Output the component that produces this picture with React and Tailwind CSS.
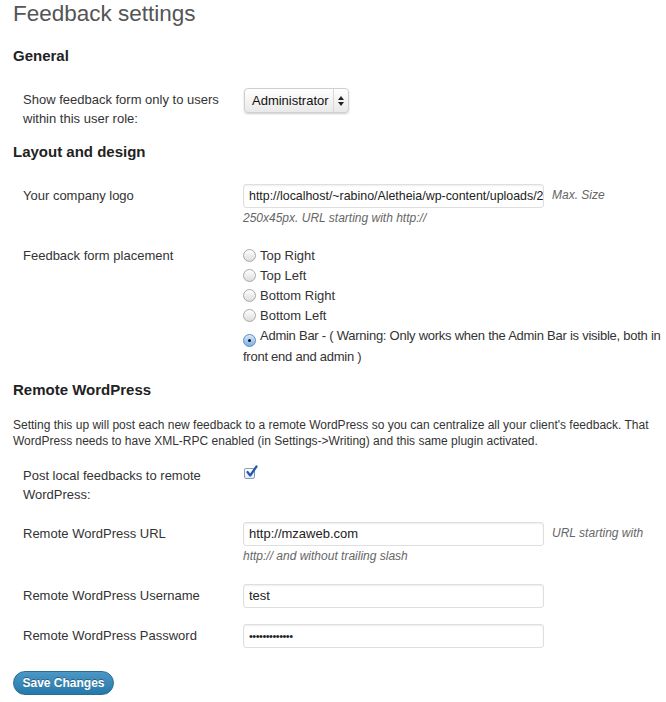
import React from 'react';

const font = { fontFamily: '"Liberation Sans", Arial, sans-serif' };

const Row = ({ label, children, tdClass = 'pt-[8px] pb-[8px] px-[10px]' }) => (
    <div className="flex">
        <div className="w-[220px] shrink-0 p-[10px] text-[13px] leading-[19px] text-[#333]">{label}</div>
        <div className={`flex-1 text-[13px] leading-[20px] text-[#333] ${tdClass}`}>{children}</div>
    </div>
);

const TextInput = ({ value, className = 'text-[13px]' }) => (
    <span className={`inline-flex h-[24px] w-[301px] items-center overflow-hidden whitespace-nowrap rounded-[3px] border border-[#dfdfdf] bg-white px-[5px] align-middle text-[#222] shadow-[inset_0_1px_2px_rgba(0,0,0,0.07)] ${className}`}>
        {value}
    </span>
);

const Radio = ({ checked }) => (
    <span
        className={`mr-[4px] inline-flex h-[13px] w-[13px] items-center justify-center rounded-full border align-[-2px] ${
            checked
                ? 'border-[#5b8bc4] bg-gradient-to-b from-[#d6e8fb] to-[#7eb1e6]'
                : 'border-[#a9a9a9] bg-gradient-to-b from-[#ffffff] to-[#dcdcdc]'
        }`}
    >
        {checked && <span className="h-[3px] w-[3px] rounded-full bg-[#111]" />}
    </span>
);

const Checkbox = () => (
    <span className="relative inline-block h-[12px] w-[12px]">
        <span className="absolute left-[1px] top-[2px] h-[11px] w-[11px] rounded-[2px] border border-[#8a9bb3] bg-gradient-to-b from-white to-[#e6ecf4]" />
        <svg className="absolute left-[2px] top-[-1px]" width="13" height="13" viewBox="0 0 13 13">
            <path d="M2.5 7 L5.2 10.5 L11.5 1.5" fill="none" stroke="#2458a8" strokeWidth="2.2" strokeLinecap="round" strokeLinejoin="round" />
        </svg>
    </span>
);

const placements = ['Top Right', 'Top Left', 'Bottom Right', 'Bottom Left'];

export default function App() {
    return (
        <div className="min-h-[702px] bg-white pl-[13px] text-[#333]" style={font}>
            <h2 className="pt-0 text-[22.5px] leading-[27px] font-light text-[#555]">Feedback settings</h2>

            <h3 className="mt-[19px] text-[15px] font-bold leading-[20px] text-[#222]">General</h3>
            <div className="mt-[14px]">
                <Row label={<>Show feedback form only to users<br />within this user role:</>}>
                    <span className="ml-[1px] inline-flex h-[25px] items-center rounded-[4px] border border-[#cfcfcf] bg-gradient-to-b from-[#ffffff] to-[#e9e9e9] text-[13px] text-[#111] shadow-[0_1px_2px_rgba(0,0,0,0.2)]">
                        <span className="pl-[7px] pr-[4px]">Administrator</span>
                        <span className="flex h-full w-[15px] flex-col items-center justify-center gap-[2px] border-l border-[#d8d8d8]">
                            <svg width="6" height="4" viewBox="0 0 6 4"><path d="M0 4 L3 0 L6 4Z" fill="#222" /></svg>
                            <svg width="6" height="4" viewBox="0 0 6 4"><path d="M0 0 L3 4 L6 0Z" fill="#222" /></svg>
                        </span>
                    </span>
                </Row>
            </div>

            <h3 className="mt-[4px] text-[15px] font-bold leading-[20px] text-[#222]">Layout and design</h3>
            <div className="mt-[14px]">
                <Row label="Your company logo">
                    <TextInput value="http://localhost/~rabino/Aletheia/wp-content/uploads/2" className="text-[12.4px]" />
                    <span className="ml-[8px] text-[12px] italic text-[#666]">Max. Size</span>
                    <div className="text-[12px] italic leading-[20px] text-[#666]">250x45px. URL starting with http://</div>
                </Row>
                <Row label="Feedback form placement" tdClass="pt-[10px] pb-[8px] pl-[10px] pr-0">
                    {placements.map((p) => (
                        <div key={p} className="leading-[20px]">
                            <Radio />
                            {p}
                        </div>
                    ))}
                    <div className="leading-[20px] tracking-[-0.25px]">
                        <Radio checked />
                        Admin Bar - ( Warning: Only works when the Admin Bar is visible, both in front end and admin )
                    </div>
                </Row>
            </div>

            <h3 className="mt-[5px] text-[15px] font-bold leading-[20px] text-[#222]">Remote WordPress</h3>
            <p className="mt-[17px] w-[650px] text-[12px] leading-[16px] text-[#333]">
                Setting this up will post each new feedback to a remote WordPress so you can centralize all your client's feedback. That WordPress needs to have XML-RPC enabled (in Settings-&gt;Writing) and this same plugin activated.
            </p>
            <div className="mt-[7px]">
                <Row label={<>Post local feedbacks to remote<br />WordPress:</>}>
                    <Checkbox />
                </Row>
                <Row label="Remote WordPress URL" tdClass="pt-[8px] pb-[10px] px-[10px]">
                    <TextInput value="http://mzaweb.com" />
                    <span className="ml-[8px] text-[12px] italic text-[#666]">URL starting with</span>
                    <div className="text-[12px] italic leading-[20px] text-[#666]">http:// and without trailing slash</div>
                </Row>
                <Row label="Remote WordPress Username">
                    <TextInput value="test" />
                </Row>
                <Row label="Remote WordPress Password">
                    <TextInput value="•••••••••••••" className="text-[11px] tracking-[-0.5px]" />
                </Row>
            </div>

            <div className="mt-[14px] pb-[8px]">
                <button className="h-[24px] w-[101px] rounded-full border border-[#2a6d94] bg-gradient-to-b from-[#4b97c6] to-[#2579aa] text-[12px] font-bold text-white [text-shadow:0_-1px_0_rgba(0,0,0,0.35)]">
                    Save Changes
                </button>
            </div>
        </div>
    );
}
